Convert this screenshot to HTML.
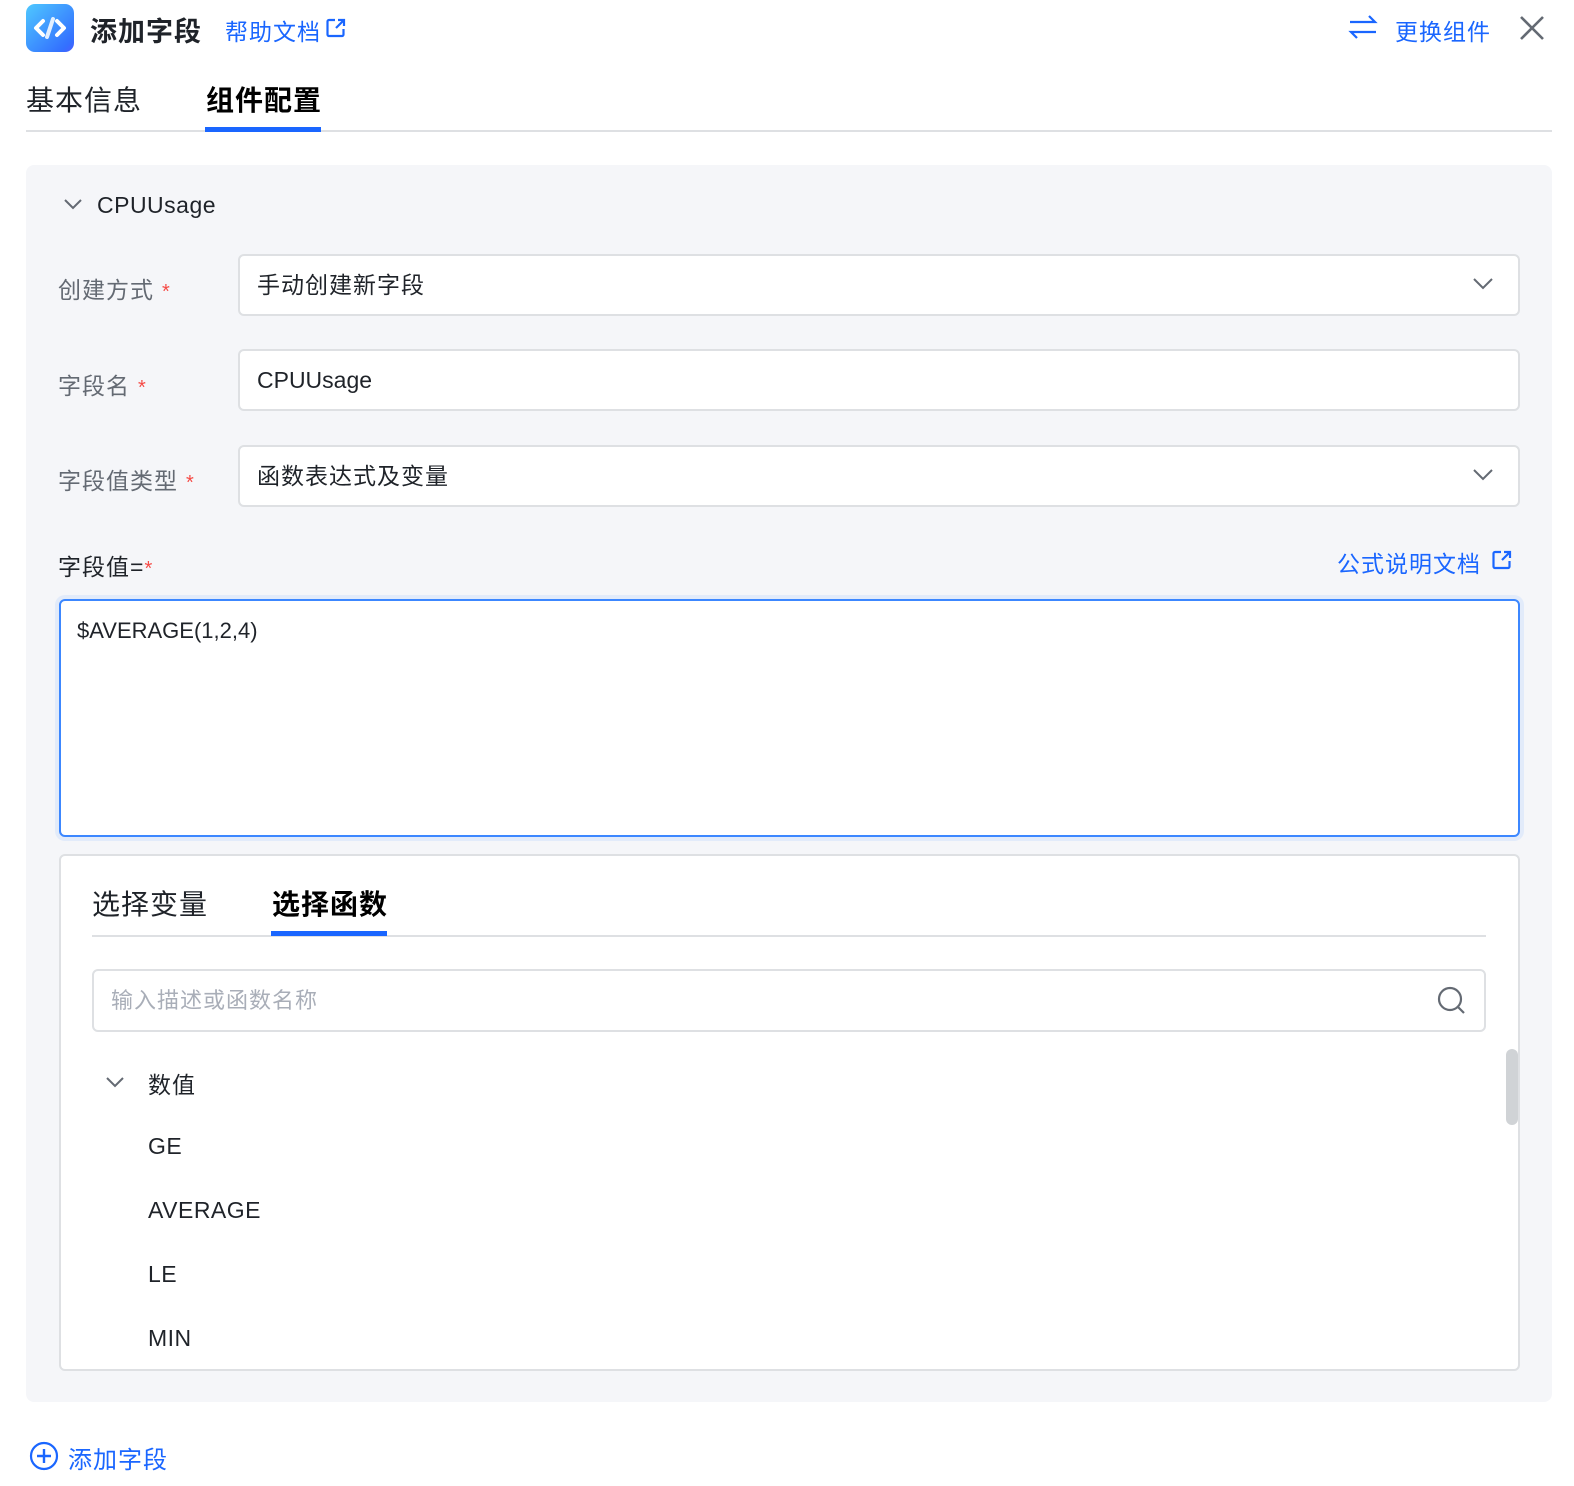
<!DOCTYPE html>
<html><head><meta charset="utf-8"><style>
*{box-sizing:border-box;margin:0;padding:0}
body{width:1574px;height:1486px;background:#fff;font-family:"Liberation Sans","Noto Sans CJK SC",sans-serif;color:#1f2329;position:relative;overflow:hidden}
.a{position:absolute}
.blue{color:#1a66ff}
.lbl{font-size:23px;color:#646a73;letter-spacing:1px}
.req{color:#f54a45;font-size:20px;margin-left:8px}
.inp{position:absolute;left:238px;width:1282px;height:62px;background:#fff;border:2px solid #dee0e3;border-radius:6px;font-size:23px;padding-left:17px;line-height:58px;color:#1f2329;letter-spacing:1px}
.chev{position:absolute;right:24px;top:20px}
</style></head><body>
<div class="a" style="left:26px;top:4px;width:48px;height:48px;border-radius:9px;background:linear-gradient(135deg,#4fc8ff,#3370ff 85%,#4a5cff)">
<svg width="48" height="48" viewBox="0 0 48 48"><path d="M17 17l-7 7 7 7M31 17l7 7-7 7" stroke="#fff" stroke-width="4" fill="none" stroke-linecap="round" stroke-linejoin="round"/><path d="M27 15l-6 18" stroke="#fff" stroke-width="4" stroke-linecap="round" opacity=".85"/></svg></div>
<div class="a" style="left:90px;top:10px;font-size:27px;font-weight:bold;color:#1f2329;letter-spacing:1px">添加字段</div>
<div class="a blue" style="left:225px;top:13px;font-size:23px;letter-spacing:1px">帮助文档</div>
<svg class="a" style="left:325px;top:17px" width="22" height="22" viewBox="0 0 22 22"><path d="M10 3H4a1.5 1.5 0 0 0-1.5 1.5v13A1.5 1.5 0 0 0 4 19h13a1.5 1.5 0 0 0 1.5-1.5V12" stroke="#1a66ff" stroke-width="2.2" fill="none"/><path d="M13 3h6v6M19 3l-8 8" stroke="#1a66ff" stroke-width="2.2" fill="none"/></svg>
<svg class="a" style="left:1348px;top:14px" width="30" height="26" viewBox="0 0 30 26"><path d="M2 8h25l-6-6M28 18H3l6 6" stroke="#1a66ff" stroke-width="2.2" fill="none"/></svg>
<div class="a blue" style="left:1395px;top:13px;font-size:23px;letter-spacing:1px">更换组件</div>
<svg class="a" style="left:1518px;top:14px" width="28" height="28" viewBox="0 0 28 28"><path d="M3 3l22 22M25 3L3 25" stroke="#646a73" stroke-width="2.6"/></svg>
<div class="a" style="left:26px;top:79px;font-size:28px;color:#1f2329;letter-spacing:1px">基本信息</div>
<div class="a" style="left:206px;top:79px;font-size:28px;font-weight:bold;color:#000;letter-spacing:1px">组件配置</div>
<div class="a" style="left:26px;top:130px;width:1526px;height:2px;background:#dee0e3"></div>
<div class="a" style="left:205px;top:127px;width:116px;height:5px;background:#1a66ff"></div>
<div class="a" style="left:26px;top:165px;width:1526px;height:1237px;background:#f5f6f9;border-radius:8px"></div>
<svg class="a" style="left:63px;top:197px" width="20" height="14" viewBox="0 0 20 14"><path d="M2 3l8 8 8-8" stroke="#646a73" stroke-width="2" fill="none"/></svg>
<div class="a" style="left:97px;top:192px;font-size:23px;color:#1f2329;letter-spacing:.5px">CPUUsage</div>
<div class="a lbl" style="left:58px;top:271px">创建方式<span class="req">*</span></div>
<div class="inp" style="top:254px">手动创建新字段<svg class="chev" width="22" height="14" viewBox="0 0 22 14"><path d="M2 3l9 9 9-9" stroke="#646a73" stroke-width="2" fill="none"/></svg></div>
<div class="a lbl" style="left:58px;top:367px">字段名<span class="req">*</span></div>
<div class="inp" style="top:349px;letter-spacing:0">CPUUsage</div>
<div class="a lbl" style="left:58px;top:462px">字段值类型<span class="req">*</span></div>
<div class="inp" style="top:445px">函数表达式及变量<svg class="chev" width="22" height="14" viewBox="0 0 22 14"><path d="M2 3l9 9 9-9" stroke="#646a73" stroke-width="2" fill="none"/></svg></div>
<div class="a" style="left:58px;top:548px;font-size:23px;color:#1f2329;letter-spacing:1px">字段值=<span style="color:#f54a45;font-size:20px">*</span></div>
<div class="a blue" style="left:1337px;top:545px;font-size:23px;letter-spacing:1px">公式说明文档</div>
<svg class="a" style="left:1491px;top:549px" width="22" height="22" viewBox="0 0 22 22"><path d="M10 3H4a1.5 1.5 0 0 0-1.5 1.5v13A1.5 1.5 0 0 0 4 19h13a1.5 1.5 0 0 0 1.5-1.5V12" stroke="#1a66ff" stroke-width="2.2" fill="none"/><path d="M13 3h6v6M19 3l-8 8" stroke="#1a66ff" stroke-width="2.2" fill="none"/></svg>
<div class="a" style="left:59px;top:599px;width:1461px;height:238px;background:#fff;border:2px solid #3c87ff;border-radius:6px;box-shadow:0 0 0 4px #e2ebfa;padding:17px 16px;font-size:22px;color:#1f2329">$AVERAGE(1,2,4)</div>
<div class="a" style="left:59px;top:854px;width:1461px;height:517px;background:#fff;border:2px solid #dee0e3;border-radius:6px"></div>
<div class="a" style="left:92px;top:883px;font-size:28px;color:#1f2329;letter-spacing:1px">选择变量</div>
<div class="a" style="left:272px;top:883px;font-size:28px;font-weight:bold;color:#000;letter-spacing:1px">选择函数</div>
<div class="a" style="left:92px;top:935px;width:1394px;height:2px;background:#dee0e3"></div>
<div class="a" style="left:271px;top:931px;width:116px;height:5px;background:#1a66ff"></div>
<div class="a" style="left:92px;top:969px;width:1394px;height:63px;border:2px solid #dee0e3;border-radius:6px;font-size:22px;color:#a9aeb8;padding-left:17px;line-height:59px;letter-spacing:1px">输入描述或函数名称</div>
<svg class="a" style="left:1437px;top:986px" width="30" height="30" viewBox="0 0 30 30"><circle cx="13" cy="13" r="11" stroke="#646a73" stroke-width="2.2" fill="none"/><path d="M21 21l6 6" stroke="#646a73" stroke-width="2.2"/></svg>
<svg class="a" style="left:105px;top:1075px" width="20" height="14" viewBox="0 0 20 14"><path d="M2 3l8 8 8-8" stroke="#646a73" stroke-width="2" fill="none"/></svg>
<div class="a" style="left:148px;top:1066px;font-size:23px;letter-spacing:1px">数值</div>
<div class="a" style="left:148px;top:1133px;font-size:23px;letter-spacing:.5px">GE</div>
<div class="a" style="left:148px;top:1197px;font-size:23px;letter-spacing:.5px">AVERAGE</div>
<div class="a" style="left:148px;top:1261px;font-size:23px;letter-spacing:.5px">LE</div>
<div class="a" style="left:148px;top:1325px;font-size:23px;letter-spacing:.5px">MIN</div>
<div class="a" style="left:1506px;top:1049px;width:12px;height:76px;background:#d0d3d6;border-radius:6px"></div>
<svg class="a" style="left:29px;top:1441px" width="30" height="30" viewBox="0 0 30 30"><circle cx="15" cy="15" r="13" stroke="#1a66ff" stroke-width="2.2" fill="none"/><path d="M15 8v14M8 15h14" stroke="#1a66ff" stroke-width="2.4"/></svg>
<div class="a blue" style="left:68px;top:1440px;font-size:24px;letter-spacing:1px">添加字段</div>
</body></html>
